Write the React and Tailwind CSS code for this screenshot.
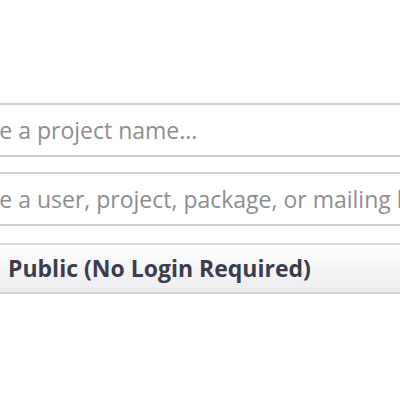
import React from 'react';

const App = () => {
    return (
        <div className="w-[400px] h-[400px] overflow-hidden bg-white" style={{ fontFamily: '"Open Sans", "Noto Sans", sans-serif' }}>
            <div className="pt-[103px] -ml-[60px] w-[520px] flex flex-col gap-[15px]">
                <div className="h-[54px] border-2 border-[#cfcfd6] bg-white flex items-center pl-[19px]">
                    <span className="text-[23px] text-[#8e8e92] whitespace-nowrap">Type a project name...</span>
                </div>
                <div className="h-[54px] border-2 border-[#cfcfd6] bg-white flex items-center pl-[19px]">
                    <span className="text-[23px] text-[#8e8e92] whitespace-nowrap">Type a user, project, package, or mailing list...</span>
                </div>
                <div className="h-[51px] mt-[2px] border-2 border-[#d6d6dc] bg-gradient-to-b from-white to-[#ececee] flex items-center pl-[66px]">
                    <span className="text-[23px] font-bold text-[#3c3c4c] whitespace-nowrap">Public (No Login Required)</span>
                </div>
            </div>
        </div>
    );
};

export default App;
